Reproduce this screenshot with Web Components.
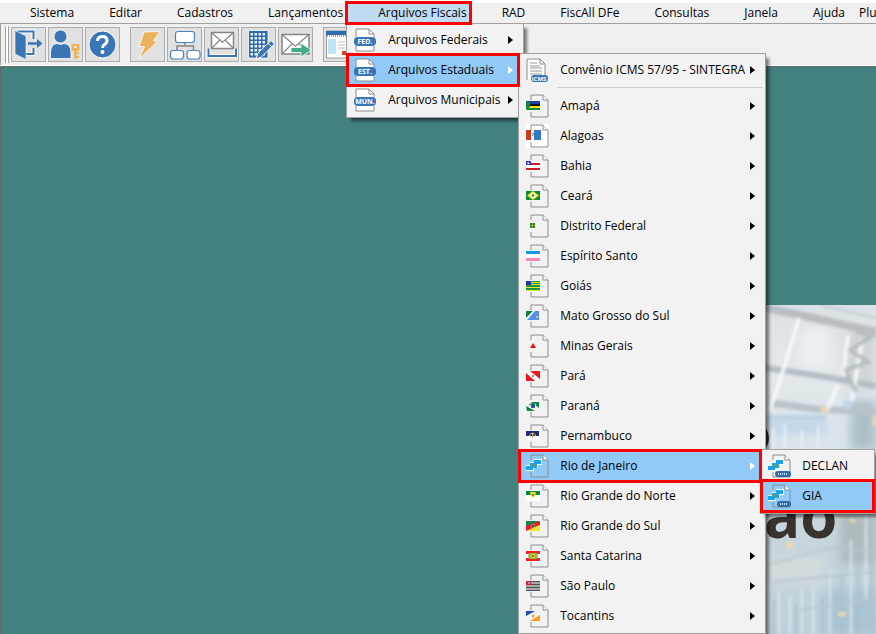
<!DOCTYPE html>
<html lang="pt-BR">
<head>
<meta charset="utf-8">
<title>Arquivos Fiscais</title>
<style>
  html, body { height: 100%; margin: 0; overflow: hidden; }
  body { font: 12px/16px "Open Sans", "Noto Sans", sans-serif; color: #000; background: #fff; }
</style>
</head>
<body>
<fiscal-app></fiscal-app>

<script>
const PAGE = '<path d="M6 6V1H18L23 6V23H6V18" fill="none" stroke="#8c8c8c"/><path d="M18 1V6H23" fill="#fff" stroke="#8c8c8c"/>';
const RIO = '<path d="M9 5H17V11H13V14H9V17H1V11H5V8H9Z" fill="#fff"/><path d="M9 6H16V10H12V14H8V16H1V12H5V9H9Z" fill="#16a5ee"/><path d="M7 10h3v3H7z" fill="#5d9a78"/>';
const pill = t => `<path d="M3 9V1H16L21 6V9M3 18V23H21V18" fill="#fff" stroke="#8c8c8c"/><path d="M16 1V6H21" fill="none" stroke="#8c8c8c"/><rect x="1" y="9" width="22" height="9" rx="4" fill="#3a76b5"/><text x="12" y="16" text-anchor="middle" font-size="7" font-weight="700" fill="#fff">${t}</text>`;
const lowPill = x => PAGE + RIO + `<rect x="${x}" y="17" width="${24 - x}" height="6" rx="3" fill="#2f6cab"/><path d="M${x + 3} 20H21" stroke="#cfe0f2" stroke-width="2" stroke-dasharray="1 1"/>`;
const flag = s => PAGE + s;

const ICONS = {
  fed: pill('FED.'), est: pill('EST.'), mun: pill('MUN.'),
  icms: '<path d="M2 22V1H15L20 6V18" fill="#fff" stroke="#8c8c8c"/><path d="M15 1V6H20" fill="none" stroke="#8c8c8c"/><path d="M5 5h7M5 8h10M5 10h12M5 13h12M5 16h12" stroke="#999"/><rect x="6" y="17" width="17" height="7" rx="3" fill="#3a76b5"/><text x="14" y="23" text-anchor="middle" font-size="6" font-weight="700" fill="#fff">ICMS</text>',
  ap: flag('<path d="M1 7H15V10H1z" fill="#1d3fa0"/><path d="M1 10H15V12H1z" fill="#111"/><path d="M4 12H15V14H4z" fill="#f5e11b"/><path d="M2 14H15V16H2zM1 7L5 8V13L1 16z" fill="#11893c"/>'),
  al: '<path d="M0 0H24V24H0z" fill="#fff"/>' + flag('<path d="M1 6H6V16H1z" fill="#cf3a1e"/><path d="M6 6H10V16H6z" fill="#fff"/><path d="M9 6H16V16H9z" fill="#3478c6"/><path d="M7 9L9 10L7 12" stroke="#4a9a6a" fill="none"/>'),
  ba: flag('<path d="M1 7H15V17H1z" fill="#fff"/><path d="M5 9H15V11H5zM1 14H15V16H1z" fill="#d01924"/><path d="M1 7H6V11H1z" fill="#2a35c8"/><path d="M3 8L5 10H2z" fill="#fff"/>'),
  ce: flag('<path d="M1 7H15V16H1z" fill="#0c8a3d"/><path d="M8 7L14 11.5L8 16L2 11.5z" fill="#f7e520"/><circle cx="8" cy="11.5" r="2.5" fill="#fff"/><circle cx="8" cy="11.5" r="1.3" fill="#1b7c65"/>'),
  df: flag('<path d="M4 8H11V15H4z" fill="#fff"/><path d="M5 9H10V14H5z" fill="#128329"/><path d="M7.5 9V14M5 11.5H10" stroke="#d9d431" stroke-width=".6"/>'),
  es: flag('<path d="M1 7H15V17H1z" fill="#fff"/><path d="M1 7H15V10H1z" fill="#1597e8"/><path d="M1 14H15V17H1z" fill="#f487b5"/>'),
  go: flag('<path d="M1 7H15V17H1z" fill="#179343"/><path d="M1 10.5H15M1 13.5H15M6 8.5H15M1 16.5H15" stroke="#f0e82c"/><path d="M1 7H6V11H1z" fill="#2733a3"/>'),
  ms: flag('<path d="M1 7H14V16H1z" fill="#fff"/><path d="M1 7H8L1 14z" fill="#15823c"/><path d="M10 7H14V16H2z" fill="#558df0"/><circle cx="12" cy="13" r="1" fill="#f4dd34"/>'),
  mg: flag('<path d="M3 7H14V16H3z" fill="#f2f2f2"/><path d="M8 9L11 14H5z" fill="#ee1111"/>'),
  pa: flag('<path d="M1 7H15V17H1z" fill="#fff"/><path d="M1 9L10 17H1zM5 7H15V15z" fill="#f3141c"/><circle cx="8" cy="12" r="1" fill="#2b69bd"/>'),
  pr: flag('<path d="M1 8H15V17H1z" fill="#f2f2f2"/><path d="M6 8H14V14zM1 12L10 17H2z" fill="#108643"/><circle cx="8" cy="12" r="3" fill="#fff"/><circle cx="8" cy="12" r="2.3" fill="#274da4"/><path d="M4 11Q7 8 10 10" stroke="#108643" fill="none"/>'),
  pe: flag('<path d="M1 7H15V16H1z" fill="#fff"/><path d="M1 7H14V12H1z" fill="#1f2c83"/><path d="M4 12Q7.5 6 11 12" stroke="#e4ba37" fill="none"/><path d="M7 9H8V14H7z" fill="#e4ba37"/>'),
  rj: flag(RIO),
  rn: flag('<path d="M1 6H15V17H1z" fill="#fff"/><path d="M1 7H15V11H1z" fill="#0c8740"/><path d="M5 8H11L10 12L8 14L6 12z" fill="#efdf2b"/><path d="M7 10H9V12H7z" fill="#8f7c36"/>'),
  rs: flag('<path d="M1 7H15L1 13z" fill="#118443"/><path d="M1 12L15 7V11L1 17z" fill="#ec1c26"/><path d="M15 11V17H2z" fill="#f5e42b"/><circle cx="8" cy="12" r="2" fill="#9ba765"/><path d="M7 11h2v2H7z" fill="#7a3028"/>'),
  sc: flag('<path d="M1 7H15V17H1z" fill="#fff"/><path d="M1 7H15V10H1zM1 14H15V17H1z" fill="#ee2028"/><path d="M4 9H12L13 12L12 15H4L3 12z" fill="#8ebd3b"/><circle cx="8" cy="12" r="2" fill="#e8d43d"/><circle cx="8" cy="12" r="1" fill="#b8382b"/>'),
  sp: flag('<path d="M1 7H15V17H1z" fill="#aaa"/><path d="M1 7.5H15M1 10.5H15M1 13.5H15M1 16.5H15" stroke="#505050"/><path d="M1 7H6V11H1z" fill="#e0232b"/><path d="M3 8h2v2H3z" fill="#79a5d6"/>'),
  to: flag('<path d="M1 7H15V17H1z" fill="#f2f2f2"/><path d="M1 7H10L1 12z" fill="#2346ac"/><path d="M15 11V17H5z" fill="#f89a1c"/><circle cx="8" cy="12" r="1.5" fill="#f7a928"/>'),
  declan: lowPill(8), gia: lowPill(10)
};

/* Toolbar drawings, on a 35-unit grid */
const env = (x, y, w, h) => `<path d="M${x} ${y}h${w}v${h}h${-w}z" fill="#fff" stroke="#858585" stroke-width="1.5"/><path d="M${x} ${y}l${w / 2} ${h * .6}l${w / 2} ${-h * .6}M${x} ${y + h}l${w * .38} ${-h * .53}M${x + w} ${y + h}l${-w * .38} ${-h * .53}" fill="none" stroke="#858585" stroke-width="1.2"/>`;
let windows = '';
for (let r = 0; r < 6; r++) for (let c = 0; c < 4; c++) windows += `<path d="M${9.5 + c * 4} ${6 + r * 4}h2.5v2.5h-2.5z"/>`;
const TOOLS = {
  sair: '<path d="M7 4.5H22.5V12M22.5 21V27H15" fill="none" stroke="#fff" stroke-width="4"/><path d="M7 4.5H22.5V12M22.5 21V27H15" fill="none" stroke="#3a76b5" stroke-width="2"/><path d="M4 3.5L15 9V32.5L4 27z" fill="#3a76b5" stroke="#fff" stroke-width=".6"/><path d="M17 16.5H27" stroke="#3a76b5" stroke-width="2.5"/><path d="M26 12L31.5 16.5L26 21z" fill="#3a76b5"/>',
  usuario: '<g fill="#3a76b5" stroke="#fff" stroke-width=".8"><path d="M2.5 31.5V26Q2.5 17 9 16.5Q12.5 18.5 16 16.5Q23 17 23 26V31.5z"/><circle cx="12.5" cy="9.5" r="6.5"/></g><path d="M23.5 17h8v7h-3v8h-2.5v-8h-2.5z" fill="#ebb25b"/><path d="M28 26h3M28 30h3" stroke="#ebb25b" stroke-width="2"/><path d="M26.5 19h2v2h-2z" fill="#fff"/>',
  ajuda: '<circle cx="17.5" cy="17.5" r="13.5" fill="#3a76b5" stroke="#fff"/><path d="M12.5 14Q12.5 9.5 17.5 9.5Q22 9.5 22 13.5Q22 16 19.5 17.5Q17.5 18.8 17.5 21" fill="none" stroke="#fff" stroke-width="3"/><circle cx="17.5" cy="25" r="2" fill="#fff"/>',
  raio: '<path d="M14 5L29.5 4.500L23.5 14H28L9 32L14.5 19.5H9z" fill="#ebb25b" stroke="#fff" stroke-width=".8"/>',
  arvore: '<path d="M18 15V19M10 23V19H26.5V23" fill="none" stroke="#858585" stroke-width="1.5"/><g fill="#fff" stroke="#4a84c0" stroke-width="1.2"><rect x="8.5" y="4.5" width="19" height="11" rx="2.5"/><rect x="3.5" y="23.5" width="13" height="8.5" rx="2.5"/><rect x="20" y="23.5" width="13" height="8.5" rx="2.5"/></g>',
  caixa: env(7.5, 5.5, 22, 16) + '<path d="M4.5 21.5V29H32V21.5" fill="none" stroke="#fff" stroke-width="4"/><path d="M4.5 21.5V29H32V21.5" fill="none" stroke="#3a76b5" stroke-width="2"/>',
  predio: `<path d="M7.5 3.5H27V31H7.5z" fill="#2f6cab" stroke="#fff" stroke-width=".8"/><g fill="#e8f0f8">${windows}</g><path d="M15 32L17 26L30 13.5L33.5 17L20.5 30z" fill="#3a76b5" stroke="#fff"/><path d="M27 16L31 20" stroke="#fff"/>`,
  enviar: env(4, 7.5, 27, 19.5) + '<path d="M13 20.5H23V16L33.5 23L23 30V25.5H13z" fill="#45ad85" stroke="#fff" stroke-width=".8"/>',
  janela: '<path d="M3.5 4H31V31H3.5z" fill="#fff" stroke="#999"/><path d="M3 4H31V8H3z" fill="#2f6cab"/><path d="M4 9H31" stroke="#333" stroke-dasharray="1 1"/><path d="M5 12H13V27H5z" fill="#bfe6f7"/><path d="M15 15H22M15 18H22M15 21H22" stroke="#bbb"/><path d="M19 24h6v4h-6z" fill="#d9402c"/>'
};

class MenuIcon extends HTMLElement {
  connectedCallback() {
    this.attachShadow({ mode: 'open' }).innerHTML =
      `<style>:host{display:block;flex:none;width:24px;height:24px}svg{display:block;width:100%;height:100%}</style>
       <svg viewBox="0 0 24 24" aria-hidden="true">${ICONS[this.getAttribute('name')] || ''}</svg>`;
  }
}

class ToolButton extends HTMLElement {
  connectedCallback() {
    this.attachShadow({ mode: 'open' }).innerHTML =
      `<style>:host{display:block;flex:none}
        button{display:block;width:35px;height:35px;padding:0;border:1px solid #adadad;background:#e1e1e1}
        svg{display:block;width:100%;height:100%}</style>
       <button type="button" aria-label="${this.getAttribute('label')}"><svg viewBox="1 1 33 33" aria-hidden="true">${TOOLS[this.getAttribute('name')]}</svg></button>`;
  }
}

class MenuItem extends HTMLElement {
  connectedCallback() {
    const icon = this.getAttribute('icon');
    this.attachShadow({ mode: 'open' }).innerHTML =
      `<style>
        :host{display:block;position:relative}
        button{display:flex;align-items:center;width:100%;height:30px;margin:0;padding:0 8px 0 4px;border:0;background:none;font:inherit;color:inherit;text-align:left;white-space:nowrap}
        .label{flex:1;min-width:0;margin-left:11px}
        .arrow{flex:none;border:4px solid transparent;border-left:5px solid #000;border-right:0}
        :host([open]) button,:host([current]) button{background:#91c9f7}
        :host([open]) .arrow{border-left-color:#fff}
        :host([marked])::after{content:"";position:absolute;inset:-2px 1px -2px -3px;border:3px solid #f00;z-index:3;pointer-events:none}
        :host([marked][leaf])::after{right:-3px}
        slot{display:block;position:absolute;z-index:2;top:-2px;left:calc(100% - 3px)}
      </style>
      <button type="button"><menu-icon name="${icon}"></menu-icon><span class="label">${this.getAttribute('label')}</span>${this.hasAttribute('leaf') ? '' : '<span class="arrow"></span>'}</button>
      <slot></slot>`;
  }
}

class MenuPanel extends HTMLElement {
  connectedCallback() {
    this.attachShadow({ mode: 'open' }).innerHTML =
      `<style>:host{display:block;box-sizing:border-box;width:var(--panel-width);padding:1px 2px 2px;border:1px solid #a0a0a0;background:#f2f2f2;box-shadow:4px 4px 3px -1px rgba(0,0,0,.5)}
       ::slotted(hr){height:1px;margin:2px 0 3px 36px;border:0;background:#d0d0d0}</style><slot></slot>`;
  }
}

class BarItem extends HTMLElement {
  connectedCallback() {
    this.attachShadow({ mode: 'open' }).innerHTML =
      `<style>
        :host{display:block;position:relative;flex:none}
        button{display:block;height:20px;padding:0 5px 0 30px;border:0;background:none;font:inherit;color:inherit;white-space:nowrap}
        :host([open]) button{background:#c0dcf3}
        :host([marked])::after{content:"";position:absolute;inset:-2px 0 -2px -3px;border:3px solid #f00;z-index:3;pointer-events:none}
        :host([last]) button{padding:0 0 0 9px}
        slot{display:block;position:absolute;z-index:2;top:100%;left:-2px}
      </style>
      <button type="button">${this.getAttribute('label')}</button><slot></slot>`;
  }
}

class MenuBar extends HTMLElement {
  connectedCallback() {
    this.attachShadow({ mode: 'open' }).innerHTML =
      `<style>:host{display:flex;position:relative;z-index:2;height:20px;background:#f0f0f0;border-top:3px solid #fff}</style><slot></slot>`;
  }
}

class ToolBar extends HTMLElement {
  connectedCallback() {
    this.attachShadow({ mode: 'open' }).innerHTML =
      `<style>
        :host{display:flex;gap:2px;padding:3px 4px 4px;background:#f0f0f0;border:solid #a0a0a0;border-width:1px 0 0 1px}
        .grip{width:2px;margin:-1px 0;border:solid #a0a0a0;border-width:0 1px;background:#fff}
        ::slotted([group]){margin-left:8px}
      </style><span class="grip"></span><slot></slot>`;
  }
}

class BackdropPhoto extends HTMLElement {
  connectedCallback() {
    this.attachShadow({ mode: 'open' }).innerHTML =
      `<style>:host{display:block;width:116px;height:329px}svg{display:block;width:100%;height:100%}</style>
      <svg viewBox="760 305 116 329" preserveAspectRatio="none" role="img" aria-label="Ilustração">
        <defs>
          <linearGradient id="sky" x1="0" y1="0" x2="0" y2="1"><stop offset="0" stop-color="#dbe2e5"/><stop offset=".2" stop-color="#e3e8eb"/><stop offset=".45" stop-color="#d8e3ea"/><stop offset=".65" stop-color="#c9d6dc"/><stop offset="1" stop-color="#bdd0da"/></linearGradient>
          <filter id="soft" x="-20%" y="-20%" width="140%" height="140%"><feGaussianBlur stdDeviation="1.5"/></filter>
          <filter id="haze" x="-30%" y="-30%" width="160%" height="160%"><feGaussianBlur stdDeviation="5"/></filter>
        </defs>
        <path d="M746 305H876V634H746z" fill="url(#sky)"/>
        <g filter="url(#haze)"><path d="M800 330l30-5v40l-30 5z" fill="#e9eff2"/><path d="M845 330h31v60h-31z" fill="#cfd5d8"/><path d="M766 420h60v14h-60z" fill="#bfd6e8"/><path d="M850 400h26v50h-26z" fill="#adc0c9"/><path d="M840 515h36v50h-36z" fill="#afbcbd"/><path d="M766 555h60v30h-60z" fill="#d2dadb"/><path d="M825 590h51v44h-51z" fill="#a9c4d4"/></g>
        <g filter="url(#soft)" fill="none">
          <path d="M746 304L800 315L876 332" stroke="#b8bec2" stroke-width="8"/>
          <path d="M820 305L876 318" stroke="#c4cacd" stroke-width="2"/>
          <path d="M746 365L820 376L876 386" stroke="#b4bec5" stroke-width="6"/>
          <path d="M772 403L815 409L876 412" stroke="#bac3c8" stroke-width="7"/>
          <path d="M746 418H826" stroke="#bed4e4" stroke-width="6"/>
          <path d="M799 318L785 365L770 410" stroke="#fbfcfc" stroke-width="3"/>
          <path d="M848 335L843 375M862 340L852 400M838 385L826 412" stroke="#f6f8f8" stroke-width="4"/>
          <path d="M856 332L872 336L850 350L868 362L846 370L856 392" stroke="#b6bdc1" stroke-width="4"/>
          <path d="M842 405l4-6 6 5-4 7z" fill="#c1d6ec"/>
          <path d="M773 428V448M785 424V448M802 430V448M818 426V448" stroke="#eef3f6" stroke-width="2"/>
          <path d="M768 580V634M779 590V634M790 596V634M802 590V634M813 586V634M830 570V634M851 540V634M866 515V600" stroke="#dde7ec" stroke-width="2"/>
          <path d="M774 600V634M796 604V634M822 596V634M842 575V634M858 560V634M872 540V634" stroke="#a9bfcc" stroke-width="2"/>
          <path d="M766 565L830 548L876 552M770 582L876 572M800 610L876 598" stroke="#b9c7cd" stroke-width="2"/>
          <path d="M786 542h7v6h-7zM838 612h8v4h-8zM850 519h5v3h-5zM821 407h7v5h-7zM873 416h3v10h-3z" fill="#ecdcae"/>
        </g>
        <ellipse cx="761" cy="438" rx="8" ry="12" fill="#2e2a28"/>
        <text x="764" y="538" font-size="60" font-weight="700" fill="#38332f">ão</text>
      </svg>`;
  }
}

const STATES = [['ap', 'Amapá'], ['al', 'Alagoas'], ['ba', 'Bahia'], ['ce', 'Ceará'], ['df', 'Distrito Federal'], ['es', 'Espírito Santo'], ['go', 'Goiás'], ['ms', 'Mato Grosso do Sul'], ['mg', 'Minas Gerais'], ['pa', 'Pará'], ['pr', 'Paraná'], ['pe', 'Pernambuco'], ['rj', 'Rio de Janeiro'], ['rn', 'Rio Grande do Norte'], ['rs', 'Rio Grande do Sul'], ['sc', 'Santa Catarina'], ['sp', 'São Paulo'], ['to', 'Tocantins']];
const stateItem = ([icon, label]) => icon === 'rj'
  ? `<menu-item icon="rj" label="${label}" open marked><menu-panel style="--panel-width:115px"><menu-item icon="declan" label="DECLAN" leaf></menu-item><menu-item icon="gia" label="GIA" leaf current marked></menu-item></menu-panel></menu-item>`
  : `<menu-item icon="${icon}" label="${label}"></menu-item>`;

class FiscalApp extends HTMLElement {
  connectedCallback() {
    this.attachShadow({ mode: 'open' }).innerHTML =
      `<style>
        :host{display:flex;flex-direction:column;height:100vh}
        main{flex:1;min-height:0;display:flex;justify-content:flex-end;align-items:flex-end;background:#438080;border:solid #696969;border-width:1px 0 0 1px;box-shadow:0 -1px #fff}
      </style>
      <menu-bar role="navigation">
        <bar-item label="Sistema"></bar-item><bar-item label="Editar"></bar-item><bar-item label="Cadastros"></bar-item><bar-item label="Lançamentos"></bar-item>
        <bar-item label="Arquivos Fiscais" open marked>
          <menu-panel style="--panel-width:178px">
            <menu-item icon="fed" label="Arquivos Federais"></menu-item>
            <menu-item icon="est" label="Arquivos Estaduais" open marked>
              <menu-panel style="--panel-width:248px">
                <menu-item icon="icms" label="Convênio ICMS 57/95 - SINTEGRA"></menu-item>
                <hr>
                ${STATES.map(stateItem).join('')}
              </menu-panel>
            </menu-item>
            <menu-item icon="mun" label="Arquivos Municipais"></menu-item>
          </menu-panel>
        </bar-item>
        <bar-item label="RAD"></bar-item><bar-item label="FiscAll DFe"></bar-item><bar-item label="Consultas"></bar-item><bar-item label="Janela"></bar-item><bar-item label="Ajuda"></bar-item><bar-item label="Plu" last></bar-item>
      </menu-bar>
      <tool-bar role="toolbar">
        <tool-button name="sair" label="Sair"></tool-button><tool-button name="usuario" label="Usuário"></tool-button><tool-button name="ajuda" label="Ajuda"></tool-button>
        <tool-button group name="raio" label="Executar"></tool-button><tool-button name="arvore" label="Estrutura"></tool-button><tool-button name="caixa" label="Caixa de entrada"></tool-button><tool-button name="predio" label="Empresa"></tool-button><tool-button name="enviar" label="Enviar"></tool-button>
        <tool-button group name="janela" label="Janela"></tool-button>
      </tool-bar>
      <main><backdrop-photo></backdrop-photo></main>`;
  }
}

customElements.define('menu-icon', MenuIcon);
customElements.define('tool-button', ToolButton);
customElements.define('menu-item', MenuItem);
customElements.define('menu-panel', MenuPanel);
customElements.define('bar-item', BarItem);
customElements.define('menu-bar', MenuBar);
customElements.define('tool-bar', ToolBar);
customElements.define('backdrop-photo', BackdropPhoto);
customElements.define('fiscal-app', FiscalApp);
</script>
</body>
</html>
